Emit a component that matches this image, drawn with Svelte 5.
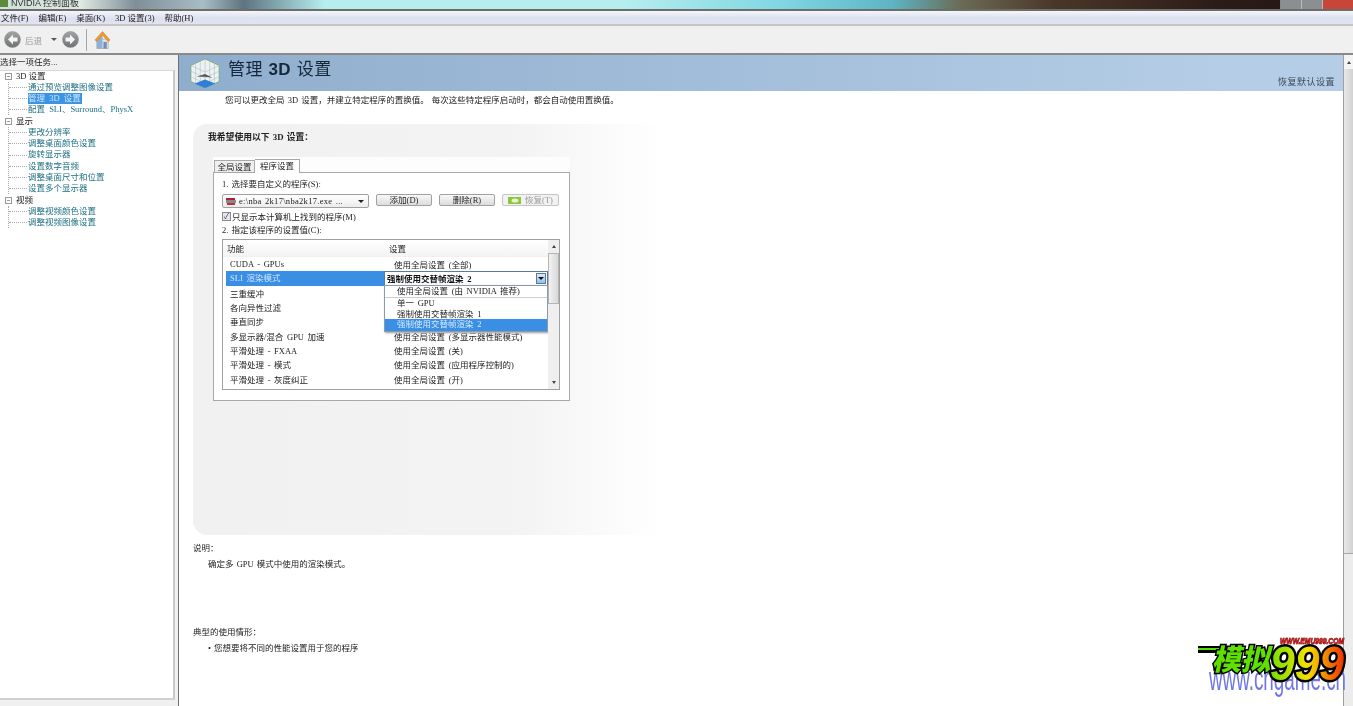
<script>
	const menus = ['文件(F)', '编辑(E)', '桌面(K)', '3D 设置(3)', '帮助(H)'];

	const tree = [
		{ label: '3D 设置', items: ['通过预览调整图像设置', '管理 3D 设置', '配置 SLI、Surround、PhysX'] },
		{
			label: '显示',
			items: ['更改分辨率', '调整桌面颜色设置', '旋转显示器', '设置数字音频', '调整桌面尺寸和位置', '设置多个显示器']
		},
		{ label: '视频', items: ['调整视频颜色设置', '调整视频图像设置'] }
	];

	const rows = [
		['CUDA - GPUs', '使用全局设置 (全部)'],
		['SLI 渲染模式', ''],
		['三重缓冲', ''],
		['各向异性过滤', ''],
		['垂直同步', ''],
		['多显示器/混合 GPU 加速', '使用全局设置 (多显示器性能模式)'],
		['平滑处理 - FXAA', '使用全局设置 (关)'],
		['平滑处理 - 模式', '使用全局设置 (应用程序控制的)'],
		['平滑处理 - 灰度纠正', '使用全局设置 (开)'],
		['平滑处理 - 设置', '使用全局设置 (应用程序控制的)']
	];

	const options = ['使用全局设置 (由 NVIDIA 推荐)', '单一 GPU', '强制使用交替帧渲染 1', '强制使用交替帧渲染 2'];
</script>

<div class="window">
	<div class="titlebar">
		<span class="appicon"></span>
		<span class="apptitle">NVIDIA 控制面板</span>
		<div class="controls">
			<span class="ctl"></span>
			<span class="ctl"></span>
			<span class="ctl close"></span>
		</div>
	</div>

	<nav class="menubar">
		{#each menus as m}
			<span>{m}</span>
		{/each}
	</nav>

	<div class="toolbar">
		<svg width="17" height="17" viewBox="0 0 17 17" class="nav">
			<defs>
				<linearGradient id="navball" x1="0" y1="0" x2="0" y2="1">
					<stop offset="0" stop-color="#a2a5a5" />
					<stop offset="1" stop-color="#6f7272" />
				</linearGradient>
			</defs>
			<circle cx="8.5" cy="8.5" r="8" fill="url(#navball)" stroke="#8a8d8d" stroke-width=".5" />
			<path d="M9 3.5 4 8.5l5 5v-3h4.500v-4H9z" fill="#f4f4f4" />
		</svg>
		<span class="back">后退</span>
		<span class="caret"></span>
		<svg width="17" height="17" viewBox="0 0 17 17" class="nav">
			<circle cx="8.5" cy="8.5" r="8" fill="url(#navball)" stroke="#8a8d8d" stroke-width=".5" />
			<path d="M8 3.5l5 5-5 5v-3H3.500v-4H8z" fill="#f4f4f4" />
		</svg>
		<span class="tooldiv"></span>
		<svg width="17" height="20" viewBox="0 0 18 20">
			<path d="M3 9h12v10H3z" fill="#e6e4dc" stroke="#9a9a90" stroke-width=".6" />
			<path d="M10 12h3.500v7H10z" fill="#6f8fb8" />
			<path d="M3 10 9 5v14H3z" fill="#8fb0d8" />
			<path d="M9 1 1 10l2 1.500L9 5l6 6.500 2-1.500z" fill="#ee9a2c" stroke="#c8761a" stroke-width=".5" />
		</svg>
	</div>

	<div class="main">
		<aside class="side">
			<div class="sidehead">选择一项任务...</div>
			<div class="treebox">
				{#each tree as group}
					<div class="group">
						<div class="grouphead"><span class="exp"></span>{group.label}</div>
						<div class="kids">
							{#each group.items as item}
								<div class="leaf">
									<span class:selected={item === '管理 3D 设置'}>{item}</span>
								</div>
							{/each}
						</div>
					</div>
				{/each}
			</div>
		</aside>

		<section class="content">
			<div class="scrollarea">
				<header class="banner">
					<svg class="cube" width="32" height="35" viewBox="0 0 34 35">
						<path d="M17 2 32 9v17l-15 7-15-7V9z" fill="#eef2f2" stroke="#6aa86a" stroke-width=".8" />
						<path d="M2 9l15 7 15-7M17 2v31M7 5v24M12 3v28M22 3v28M27 5v24M2 15l15 7 15-7M2 21l15 7 15-7" fill="none" stroke="#a9bcc2" stroke-width=".6" />
						<path d="M6 28l11-4 11 4-11 5z" fill="#2f7ed8" />
						<path d="M8 21l9-3 8 4-8-1z" fill="#555" />
					</svg>
					<h1>管理 <b>3D</b> 设置</h1>
					<button class="restore" type="button">恢复默认设置</button>
				</header>

				<p class="intro">您可以更改全局 3D 设置，并建立特定程序的置换值。 每次这些特定程序启动时，都会自动使用置换值。</p>

				<div class="panel">
					<h2>我希望使用以下 3D 设置：</h2>
					<div class="tabwrap">
						<div class="tabs">
							<span class="tab">全局设置</span>
							<span class="tab active">程序设置</span>
						</div>
						<div class="card">
							<div class="label">1. 选择要自定义的程序(S):</div>
							<div class="progrow">
								<div class="combo">
									<svg width="11" height="9" viewBox="0 0 11 9"><path d="M0 1h9v2H0z" fill="#b02030" /><path d="M0 3h10v3H0z" fill="#888" /><path d="M1 6h8v2H1z" fill="#c03040" /></svg>
									<span>e:\nba 2k17\nba2k17.exe ...</span>
									<i class="down"></i>
								</div>
								<button type="button" class="btn wide">添加(D)</button>
								<button type="button" class="btn wide">删除(R)</button>
								<button type="button" class="btn off">
									<svg width="13" height="7" viewBox="0 0 13 7"><rect width="13" height="7" fill="#8cc63f" /><ellipse cx="7" cy="3.500" rx="3.500" ry="2" fill="#e8f4d0" /></svg>
									恢复(T)
								</button>
							</div>
							<label class="check"><span class="box">✓</span>只显示本计算机上找到的程序(M)</label>
							<div class="label two">2. 指定该程序的设置值(C):</div>

							<div class="table">
								<div class="tablemain">
									<div class="thead"><span>功能</span><span>设置</span></div>
									{#each rows as row, i}
										<div class="trow" class:picked={i === 1}>
											<span class="name">{row[0]}</span>
											{#if i === 1}
												<div class="cellcombo">
													<span>强制使用交替帧渲染 2</span>
													<i class="cellbtn"></i>
												</div>
											{:else}
												<span class="value">{row[1]}</span>
											{/if}
										</div>
									{/each}
									<ul class="dropdown">
										{#each options as opt, i}
											<li class:first={i === 0} class:hot={i === 3}>{opt}</li>
										{/each}
									</ul>
								</div>
								<div class="vbar">
									<span class="arrow up"></span>
									<span class="thumb"></span>
									<span class="arrow dn"></span>
								</div>
							</div>
						</div>
					</div>
				</div>

				<div class="notes">
					<div class="notehead">说明：</div>
					<p class="note">确定多 GPU 模式中使用的渲染模式。</p>
					<div class="notehead usage">典型的使用情形：</div>
					<p class="note">• 您想要将不同的性能设置用于您的程序</p>
				</div>
			</div>

			<div class="pagebar">
				<span class="pagearrow"></span>
				<span class="pagethumb"></span>
			</div>

			<svg class="logo" width="150" height="68" viewBox="0 0 150 68">
				<defs>
					<linearGradient id="nines" x1="0" y1="0" x2="1" y2="0">
						<stop offset="0" stop-color="#6fe000" />
						<stop offset=".5" stop-color="#f4e000" />
						<stop offset="1" stop-color="#f03000" />
					</linearGradient>
				</defs>
				<text class="site" x="11" y="54" textLength="137" lengthAdjust="spacingAndGlyphs">www.cngame.cn</text>
				<rect x="0" y="10" width="30" height="7" fill="#000" />
				<rect x="0" y="12" width="30" height="2" fill="#4fe000" />
				<text class="mo" transform="translate(14 34) skewX(-12)">模拟</text>
				<text class="nine" x="72" y="44" textLength="74" lengthAdjust="spacingAndGlyphs">999</text>
				<text class="url" x="82" y="8" textLength="64" lengthAdjust="spacingAndGlyphs">WWW.EMU999.COM</text>
			</svg>
		</section>
	</div>
</div>

<style>
	:global(body) {
		margin: 0;
		background: #fff;
	}
	.window {
		width: 1353px;
		height: 706px;
		overflow: hidden;
		display: flex;
		flex-direction: column;
		background: #f0f0f0;
		font-family: 'Liberation Serif', 'Noto Sans CJK SC', serif;
		font-size: 8.5px;
		color: #222;
		filter: blur(0.3px);
	}
	.titlebar {
		height: 9px;
		flex: none;
		display: flex;
		align-items: flex-start;
		overflow: hidden;
		border-bottom: 2px solid #6c6c68;
		background: linear-gradient(90deg, #cfe0da 0, #dfe8e2 6%, #7e8f98 10%, #a9bdc4 15%, #5e7480 18%, #b6eeee 24%, #b6eeee 46%, #7fd6e2 58%, #5db4c4 66%, #6a6b55 71%, #4a3628 78%, #2c1c18 90%, #201512 100%);
	}
	.appicon {
		width: 8px;
		height: 7px;
		background: #5a8a3a;
		flex: none;
	}
	.apptitle {
		margin-left: 3px;
		margin-top: -2px;
		line-height: 10px;
		font-size: 9px;
		font-family: 'Liberation Sans', 'Noto Sans CJK SC', sans-serif;
		color: #333;
	}
	.controls {
		margin-left: auto;
		display: flex;
		height: 9px;
		border: 1px solid #888;
		border-top: 0;
		border-right: 0;
	}
	.ctl {
		width: 20px;
		background: #8c8f92;
		border-right: 1px solid #bbb;
	}
	.ctl.close {
		width: 30px;
		background: #c8453a;
		border-right: 0;
	}
	.menubar {
		height: 12px;
		flex: none;
		display: flex;
		gap: 10px;
		padding: 0 0 1px 1px;
		align-items: center;
		background: linear-gradient(#f4f6fb, #dde1f0 55%, #e0e3f0);
		border-bottom: 2px solid #c6c6c6;
	}
	.toolbar {
		height: 27px;
		flex: none;
		display: flex;
		align-items: center;
		padding-left: 4px;
		background: #f0f0f0;
		border-bottom: 2px solid #8a8a8a;
	}
	.back {
		margin-left: 4px;
		color: #999;
		width: 19px;
	}
	.caret {
		margin: 0 5px 0 7px;
		border: 3px solid transparent;
		border-top: 3px solid #555;
		border-bottom: 0;
	}
	.tooldiv {
		width: 1px;
		height: 22px;
		background: #a5a5a5;
		margin: 0 7px;
	}
	.main {
		flex: 1;
		min-height: 0;
		display: flex;
	}
	.side {
		width: 175px;
		flex: none;
		display: flex;
		flex-direction: column;
		padding-bottom: 6px;
		border-right: 3px solid #f0f0f0;
	}
	.sidehead {
		height: 15px;
		line-height: 14px;
		color: #222;
	}
	.treebox {
		flex: 1;
		background: #fff;
		border-right: 2px solid #c8c8c8;
		border-top: 1px solid #d8d8d8;
		border-bottom: 2px solid #d0d0d0;
	}
	.group {
		margin-bottom: 0.8px;
	}
	.grouphead {
		height: 11.1px;
		line-height: 11.1px;
		display: flex;
		align-items: center;
		padding-left: 5px;
		gap: 4px;
	}
	.exp {
		width: 5px;
		height: 5px;
		border: 1px solid #999;
		background: linear-gradient(#999, #999) center / 3px 1px no-repeat #fff;
		flex: none;
	}
	.kids {
		margin-left: 8px;
		border-left: 1px dotted #aaa;
	}
	.leaf {
		height: 11.1px;
		line-height: 11.1px;
		display: flex;
		align-items: center;
		color: #1d6f82;
		word-spacing: 2px;
	}
	.leaf::before {
		content: '';
		width: 18px;
		border-top: 1px dotted #aaa;
		margin-right: 1px;
		flex: none;
	}
	.selected {
		background: #3a94e6;
		color: #cfe6f8;
		padding-right: 1px;
	}
	.content {
		flex: 1;
		min-width: 0;
		display: flex;
		position: relative;
		border-left: 1px solid #707070;
		background: #fff;
	}
	.scrollarea {
		flex: 1;
		min-width: 0;
	}
	.banner {
		height: 36px;
		display: flex;
		align-items: center;
		background: linear-gradient(90deg, #8fadcd, #b5cde6 90%);
		position: relative;
		padding-left: 10px;
	}
	.cube {
		flex: none;
		margin-top: 1px;
	}
	h1 {
		margin: 0 0 12px 7px;
		font-size: 17px;
		font-weight: 400;
		letter-spacing: 0.4px;
		word-spacing: 1.5px;
		color: #15273a;
		font-family: 'Noto Sans CJK SC', sans-serif;
	}
	h1 b {
		font-family: 'Liberation Sans', sans-serif;
		font-weight: 700;
	}
	.restore {
		all: unset;
		margin: auto 8px 3px auto;
		font-size: 9px;
		letter-spacing: 0.5px;
		color: #3d4a55;
	}
	.intro {
		margin: 3px 0 0 46px;
		height: 30px;
		line-height: 12px;
		word-spacing: 1px;
	}
	.panel {
		margin-left: 14px;
		width: 470px;
		height: 411px;
		box-sizing: border-box;
		padding: 7px 0 0 15px;
		border-radius: 14px 0 0 14px;
		background: linear-gradient(90deg, #f1f1f1, #f3f3f3 68%, #fff);
	}
	h2 {
		margin: 0 0 14px;
		font-size: 8.8px;
		line-height: 12px;
		font-weight: 700;
		word-spacing: 1px;
	}
	.tabwrap {
		margin-left: 5px;
		width: 357px;
		background: linear-gradient(#fdfdfd, #fff);
	}
	.tabs {
		height: 15px;
		display: flex;
		align-items: flex-end;
		padding-left: 1px;
	}
	.tab {
		box-sizing: border-box;
		height: 12px;
		width: 41px;
		line-height: 12px;
		text-align: center;
		border: 1px solid #a8a8a8;
		border-bottom: 0;
		background: #efefef;
	}
	.tab.active {
		height: 14px;
		width: 45px;
		line-height: 12px;
		background: #fff;
		border-left: 0;
		margin-bottom: -1px;
		position: relative;
	}
	.card {
		box-sizing: border-box;
		height: 229px;
		border: 1px solid #a8a8a8;
		padding: 6px 9px 0 8px;
		background: #fff;
	}
	.label {
		line-height: 11px;
		height: 11px;
		word-spacing: 1px;
	}
	.progrow {
		display: flex;
		align-items: flex-start;
		margin-top: 4px;
		gap: 7px;
	}
	.combo {
		box-sizing: border-box;
		width: 147px;
		height: 14px;
		border: 1px solid #a0a0a0;
		border-radius: 2px;
		display: flex;
		align-items: center;
		gap: 2px;
		padding: 0 4px 0 3px;
		background: linear-gradient(#fff, #ececec);
		word-spacing: 1px;
		letter-spacing: 0.3px;
	}
	.down {
		margin-left: auto;
		border: 3px solid transparent;
		border-top: 3px solid #222;
		border-bottom: 0;
	}
	.btn {
		all: unset;
		box-sizing: border-box;
		height: 12px;
		line-height: 10px;
		text-align: center;
		border: 1px solid #a0a0a0;
		border-radius: 2px;
		background: linear-gradient(#f8f8f8, #dcdcdc);
		color: #222;
		font-size: 8.5px;
	}
	.btn.wide {
		width: 56px;
	}
	.btn.off {
		width: 57px;
		display: flex;
		align-items: center;
		justify-content: center;
		gap: 4px;
		color: #9a9a9a;
		background: #f2f2f2;
		border-color: #c4c4c4;
	}
	.check {
		display: flex;
		align-items: center;
		gap: 1px;
		height: 12px;
		margin-top: 2px;
	}
	.box {
		box-sizing: border-box;
		width: 9px;
		height: 9px;
		border: 1px solid #8a8a8a;
		background: #e4e8ee;
		font-size: 8px;
		line-height: 7px;
		color: #445;
		text-align: center;
	}
	.two {
		margin-top: 3px;
	}
	.table {
		margin-top: 3px;
		height: 151px;
		box-sizing: border-box;
		border: 1px solid #a0a0a0;
		display: flex;
		overflow: hidden;
	}
	.tablemain {
		flex: 1;
		min-width: 0;
		position: relative;
		overflow: hidden;
	}
	.thead {
		height: 16px;
		display: grid;
		grid-template-columns: 162px 1fr;
		align-items: center;
		padding-left: 4px;
		background: linear-gradient(#fff, #f4f4f4);
		border-bottom: 1px solid #f0f0f0;
	}
	.trow {
		height: 14.3px;
		display: grid;
		grid-template-columns: 158px 1fr;
		margin-left: 3px;
		align-items: center;
		word-spacing: 1.5px;
	}
	.name {
		padding-left: 4px;
		white-space: nowrap;
	}
	.value {
		padding-left: 10px;
		white-space: nowrap;
	}
	.picked .name {
		background: #3a8fe4;
		color: #cfe6f8;
		line-height: 14.3px;
	}
	.cellcombo {
		box-sizing: border-box;
		height: 14.3px;
		border: 1px solid #5a7a9a;
		background: #fff;
		display: flex;
		align-items: center;
		padding-left: 2px;
		font-weight: 700;
		color: #111;
	}
	.cellbtn {
		margin-left: auto;
		margin-right: 1px;
		width: 10px;
		height: 11px;
		box-sizing: border-box;
		border: 1px solid #5a7a9a;
		background: linear-gradient(#dcecf8, #8fc0ea);
		display: flex;
		align-items: center;
		justify-content: center;
	}
	.cellbtn::after {
		content: '';
		border: 3px solid transparent;
		border-top: 3px solid #111;
		border-bottom: 0;
	}
	.dropdown {
		position: absolute;
		left: 161px;
		top: 45px;
		right: 0;
		margin: 0;
		padding: 0;
		list-style: none;
		background: #fff;
		border: 1px solid #8a9aaa;
		box-shadow: 1px 1px 2px #999;
		word-spacing: 1.5px;
	}
	.dropdown li {
		height: 10.5px;
		line-height: 10.5px;
		padding-left: 12px;
		white-space: nowrap;
	}
	.dropdown li.first {
		height: 11px;
		line-height: 11px;
		border-bottom: 1px solid #c8d0d8;
	}
	.dropdown li.hot {
		height: 12px;
		background: #3a8fe4;
		color: #d8ecfb;
	}
	.vbar {
		width: 11px;
		flex: none;
		display: flex;
		flex-direction: column;
		align-items: stretch;
		background: #efefef;
	}
	.arrow {
		height: 13px;
		display: flex;
		align-items: center;
		justify-content: center;
	}
	.arrow.up::after {
		content: '';
		border: 2.5px solid transparent;
		border-bottom: 3px solid #444;
		border-top: 0;
	}
	.arrow.dn {
		margin-top: auto;
	}
	.arrow.dn::after {
		content: '';
		border: 2.5px solid transparent;
		border-top: 3px solid #444;
		border-bottom: 0;
	}
	.thumb {
		height: 51px;
		box-sizing: border-box;
		border: 1px solid #b4b4b4;
		background: linear-gradient(90deg, #f2f2f2, #d8d8d8);
	}
	.notes {
		padding-left: 14px;
	}
	.notehead {
		margin-top: 7px;
		line-height: 12px;
	}
	.notehead.usage {
		margin-top: 56px;
	}
	.note {
		margin: 4px 0 0 15px;
		line-height: 12px;
		word-spacing: 1px;
	}
	.pagebar {
		width: 9px;
		flex: none;
		display: flex;
		flex-direction: column;
		background: #ececec;
		border-left: 1px solid #a0a0a0;
	}
	.pagearrow {
		height: 14px;
		flex: none;
		background: #f4f4f4;
		display: flex;
		align-items: center;
		justify-content: center;
	}
	.pagearrow::after {
		content: '';
		border: 2.5px solid transparent;
		border-bottom: 3px solid #444;
		border-top: 0;
	}
	.pagethumb {
		height: 485px;
		flex: none;
		box-sizing: border-box;
		background: linear-gradient(90deg, #e8e8e8, #d2d2d2);
		border-bottom: 1px solid #a8a8a8;
	}
	.logo {
		position: absolute;
		left: 1019px;
		top: 581px;
		overflow: visible;
	}
	.site {
		font: 400 33px 'Liberation Sans', sans-serif;
		fill: #7076e4;
	}
	.mo {
		font: 900 29px 'Noto Sans CJK SC', sans-serif;
		fill: #5fe000;
		stroke: #000;
		stroke-width: 3px;
		paint-order: stroke;
	}
	.nine {
		font: italic 700 48px 'Liberation Sans', sans-serif;
		fill: url(#nines);
		stroke: #000;
		stroke-width: 5px;
		paint-order: stroke;
	}
	.url {
		font: italic 700 9px 'Liberation Sans', sans-serif;
		fill: #e81010;
		stroke: #300;
		stroke-width: 0.7px;
		paint-order: stroke;
	}
</style>
